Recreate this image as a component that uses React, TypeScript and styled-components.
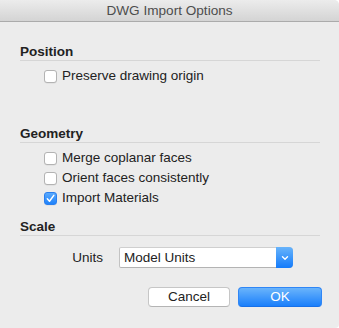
import React from "react";
import styled, { createGlobalStyle } from "styled-components";

const Global = createGlobalStyle`
  html, body { margin: 0; padding: 0; background: #ffffff; }
  body { font-family: "Liberation Sans", Arial, sans-serif; -webkit-font-smoothing: antialiased; }
`;

const Window = styled.div`
  width: 339px;
  height: 328px;
  background: #ececec;
  border-radius: 0 5px 4px 0;
  overflow: hidden;
  display: flex;
  flex-direction: column;
  font-size: 13.5px;
  color: #222;
`;

const TitleBar = styled.div`
  height: 21px;
  flex: none;
  display: flex;
  align-items: center;
  justify-content: center;
  background: linear-gradient(#ececec, #d4d4d4);
  border-bottom: 1px solid #ababab;
  color: #4d4d4d;
  font-size: 13.6px;
`;

const Body = styled.div`
  display: flex;
  flex-direction: column;
  padding: 0 19px 0 20px;
`;

const SectionHeader = styled.div<{ $top: number }>`
  margin-top: ${(p) => p.$top}px;
  height: 16px;
  line-height: 16px;
  font-weight: bold;
  color: #222;
  border-bottom: 1px solid #d6d6d6;
`;

const CheckList = styled.div`
  display: flex;
  flex-direction: column;
  margin-top: 5px;
  padding-left: 24px;
`;

const CheckRow = styled.label`
  height: 20px;
  display: flex;
  align-items: center;
  gap: 5px;
  line-height: 16px;
`;

const Box = styled.span<{ $checked?: boolean }>`
  width: 13px;
  height: 13px;
  box-sizing: border-box;
  border-radius: 3px;
  display: flex;
  align-items: center;
  justify-content: center;
  border: 1px solid ${(p) => (p.$checked ? "#2a7fee" : "#b3b3b3")};
  background: ${(p) => (p.$checked ? "linear-gradient(#5aaafd, #1f82fa)" : "#ffffff")};
  box-shadow: 0 0.5px 0.5px rgba(0, 0, 0, 0.08);
`;

const UnitsRow = styled.div`
  margin-top: 11px;
  display: flex;
  align-items: center;
  gap: 16px;
`;

const UnitsLabel = styled.span`
  width: 83px;
  text-align: right;
`;

const Select = styled.div`
  width: 174px;
  height: 21px;
  box-sizing: border-box;
  display: flex;
  background: #ffffff;
  border: 1px solid #c3c3c3;
  border-top-color: #cfcfcf;
  border-bottom-color: #b3b3b3;
  border-radius: 2px 4px 4px 2px;
`;

const SelectValue = styled.span`
  flex: 1;
  padding-left: 4px;
  line-height: 19px;
`;

const Chevron = styled.span`
  width: 17px;
  margin: -1px -1px -1px 0;
  border-radius: 0 4px 4px 0;
  background: linear-gradient(#68b4fb, #137bfb);
  display: flex;
  align-items: center;
  justify-content: center;
`;

const ButtonRow = styled.div`
  margin-top: 19px;
  display: flex;
  justify-content: flex-end;
  gap: 8px;
  margin-right: -2px;
`;

const Button = styled.button<{ $primary?: boolean; $w: number }>`
  width: ${(p) => p.$w}px;
  height: 20px;
  box-sizing: border-box;
  padding: 0;
  font-family: inherit;
  font-size: 13.5px;
  border-radius: 4px;
  border: 1px solid ${(p) => (p.$primary ? "#2f86f6" : "#c6c6c6")};
  border-bottom-color: ${(p) => (p.$primary ? "#1770e8" : "#b4b4b4")};
  background: ${(p) => (p.$primary ? "linear-gradient(#6ab4fb, #1a7ffb)" : "#ffffff")};
  color: ${(p) => (p.$primary ? "#ffffff" : "#222")};
  line-height: 18px;
`;

const Check = ({ checked, label }: { checked?: boolean; label: string }) => (
  <CheckRow>
    <Box $checked={checked}>
      {checked && (
        <svg width="9" height="9" viewBox="0 0 9 9">
          <path d="M1.3 4.8 L3.5 7.2 L7.8 1.4" fill="none" stroke="#fff" strokeWidth="1.5" strokeLinecap="round" strokeLinejoin="round" />
        </svg>
      )}
    </Box>
    <span>{label}</span>
  </CheckRow>
);

export default function App() {
  return (
    <>
      <Global />
      <Window>
        <TitleBar>DWG Import Options</TitleBar>
        <Body>
          <SectionHeader $top={22}>Position</SectionHeader>
          <CheckList>
            <Check label="Preserve drawing origin" />
          </CheckList>
          <SectionHeader $top={40}>Geometry</SectionHeader>
          <CheckList>
            <Check label="Merge coplanar faces" />
            <Check label="Orient faces consistently" />
            <Check checked label="Import Materials" />
          </CheckList>
          <SectionHeader $top={11}>Scale</SectionHeader>
          <UnitsRow>
            <UnitsLabel>Units</UnitsLabel>
            <Select>
              <SelectValue>Model Units</SelectValue>
              <Chevron>
                <svg width="8" height="6" viewBox="0 0 8 6">
                  <path d="M1.5 1.8 L4 4.2 L6.5 1.8" fill="none" stroke="#fff" strokeWidth="1.4" strokeLinecap="round" strokeLinejoin="round" />
                </svg>
              </Chevron>
            </Select>
          </UnitsRow>
          <ButtonRow>
            <Button $w={82}>Cancel</Button>
            <Button $primary $w={84}>OK</Button>
          </ButtonRow>
        </Body>
      </Window>
    </>
  );
}
